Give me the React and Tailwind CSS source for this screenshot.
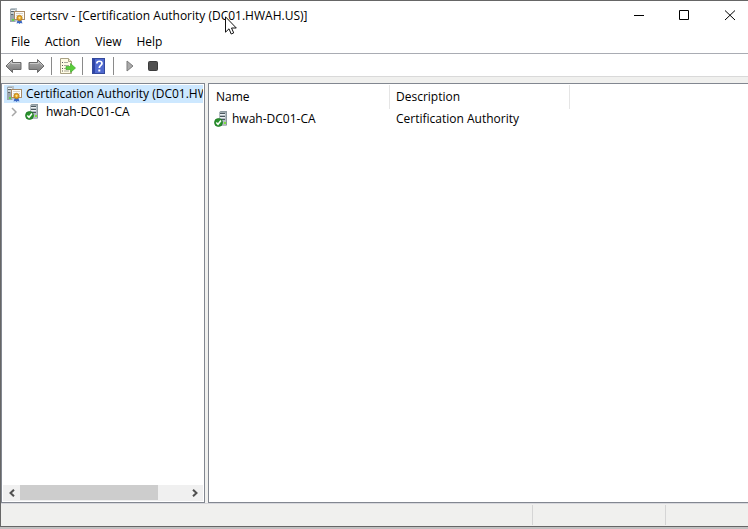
import React from "react";

function AuthorityIcon() {
  return (
    <svg width="16" height="16" viewBox="0 0 16 16" aria-hidden="true" className="shrink-0">
      <path d="M1 1 2.500 0H8v13l-1 1H1z" fill="#b9c3c9" />
      <path d="M1 1h5v13H1z" fill="#9aa6ad" />
      <path d="M2 2h4v1H2zM2 4.500h3v1H2z" fill="#f2f5f6" />
      <path d="M2 3h4v1H2zM2 6h2v1H2z" fill="#59666d" />
      <path d="M3 11h2v2H3z" fill="#5fd64a" />
      <rect x="5.500" y="3.500" width="10" height="8" fill="#fdfcf8" stroke="#a98b68" />
      <path d="M7 5.500h7M7 7.500h2M13 7.500h1" stroke="#d5d0cb" />
      <path d="m9 11-1.500 4.500 2-.5L10.500 16l1-1 2 .5L12 11z" fill="#3a68c4" />
      <circle cx="10.500" cy="10" r="2.700" fill="#e0a023" stroke="#b87a10" strokeWidth=".7" />
      <circle cx="10.500" cy="9.800" r="1.100" fill="#ffe58c" />
    </svg>
  );
}

function ServerIcon() {
  return (
    <svg width="16" height="16" viewBox="0 0 16 16" aria-hidden="true" className="shrink-0">
      <path d="M5 1.500 6.500 0H13v14l-1 1H5z" fill="#8d999f" />
      <path d="M5 1.500h7V15H5z" fill="#b3bdc2" />
      <path d="M6 2h5v1H6zM6 5h5v1H6zM7 8h4v1H7z" fill="#4c585e" />
      <path d="M6 3h5v1H6zM6 6h5v1H6z" fill="#eef2f4" />
      <path d="M10 11h2v2h-2z" fill="#7be03a" />
      <circle cx="4.500" cy="11.500" r="4" fill="#2a922c" stroke="#17701e" strokeWidth=".7" />
      <path d="m2.300 11.500 1.700 1.800 3-3.800" fill="none" stroke="#fff" strokeWidth="1.500" />
    </svg>
  );
}

function ArrowIcon({ flip }) {
  return (
    <svg width="17" height="16" viewBox="0 0 17 16" aria-hidden="true" className={flip ? "-scale-x-100" : ""}>
      <defs>
        <linearGradient id={flip ? "arrow-r" : "arrow-l"} x2="0" y2="1">
          <stop stopColor="#b0b0b0" />
          <stop offset=".5" stopColor="#959595" />
          <stop offset="1" stopColor="#777" />
        </linearGradient>
      </defs>
      <path
        d="M1 8 7.500 1.500v3H16v7H7.500v3z"
        fill={flip ? "url(#arrow-r)" : "url(#arrow-l)"}
        stroke="#6b6b6b"
        strokeLinejoin="round"
      />
      <path d="M2.500 7.500 6.500 3.700V5.500H15" fill="none" stroke="#c8c8c8" />
    </svg>
  );
}

function ExportIcon() {
  return (
    <svg width="17" height="16" viewBox="0 0 17 16" aria-hidden="true">
      <path d="M1.500.5h8l3 3v12h-11z" fill="#fffbe4" stroke="#a8a184" />
      <path d="M9.500.5v3h3" fill="#eee7c4" stroke="#a8a184" />
      <path d="M3 4.500h1M3 7.500h1M3 10.500h1M3 13h1" stroke="#555" />
      <path d="M5 4.500h4M5 7.500h5M5 10.500h3M5 13h5" stroke="#aaa99c" />
      <path d="M7 8.500h4.500v-3L16.500 10l-5 4.500v-3H7z" fill="#59ce39" stroke="#42a82b" strokeWidth=".7" />
    </svg>
  );
}

function HelpIcon() {
  return (
    <svg width="13" height="16" viewBox="0 0 13 16" aria-hidden="true">
      <rect x=".5" y=".5" width="12" height="15" fill="#4f69cf" stroke="#34499c" />
      <path d="M1 1h2v14H1z" fill="#2f45a6" />
      <path d="M4.800 5.500C4.800 2.500 10 2.500 10 5.500 10 7.500 7.300 7.500 7.300 10" fill="none" stroke="#fff" strokeWidth="1.700" />
      <path d="M6.300 11.500h2v2h-2z" fill="#fff" />
    </svg>
  );
}

function ScrollArrow({ flip }) {
  return (
    <svg width="6" height="8" viewBox="0 0 6 8" aria-hidden="true" className={flip ? "-scale-x-100" : ""}>
      <path d="M5 .7 1.500 4 5 7.300" fill="none" stroke="#505050" strokeWidth="2" />
    </svg>
  );
}

function Caption({ label, children }) {
  return (
    <button type="button" aria-label={label} className="flex h-[29px] w-[37px] items-center justify-center">
      <svg width="13" height="11" viewBox="0 0 13 11" fill="none" stroke="#000" aria-hidden="true">
        {children}
      </svg>
    </button>
  );
}

function Separator() {
  return <span className="h-[18px] w-px shrink-0 bg-[#8a8a8a]" />;
}

export default function App() {
  return (
    <div className="flex h-screen flex-col overflow-hidden bg-[#c2c1c1] pb-0.5 font-['Open_Sans','Noto_Sans',sans-serif] text-[12px] leading-4 text-black">
      <div className="flex min-h-0 flex-1 flex-col border-y border-l border-[#666] bg-[#f0f0ee]">
        <header className="relative flex h-[30px] shrink-0 items-center bg-white pl-2">
          <AuthorityIcon />
          <h1 className="ml-[5px] flex-1 whitespace-nowrap">certsrv - [Certification Authority (DC01.HWAH.US)]</h1>
          <div className="flex gap-[9px] self-start">
            <Caption label="Minimize"><path d="M3 5.500h10" /></Caption>
            <Caption label="Maximize"><path d="M2.500.5h9v9h-9z" /></Caption>
            <Caption label="Close"><path d="m2 .5 10 9.500M12 .5 2 10" /></Caption>
          </div>
          <svg width="12" height="19" viewBox="0 0 12 19" aria-hidden="true" className="absolute left-[224px] top-[15px]">
            <path d="M.5.8v15.400L4 12.800 6.200 18l2.500-1.100L6.500 12h4.800z" fill="#fff" stroke="#111" />
          </svg>
        </header>

        <nav className="flex h-[23px] shrink-0 items-center gap-[15px] border-b border-[#a9acb3] bg-white pl-2.5">
          <button type="button">File</button>
          <button type="button">Action</button>
          <button type="button">View</button>
          <button type="button">Help</button>
        </nav>

        <div className="flex h-[23px] shrink-0 items-center border-b border-[#d9d9d9] bg-white pl-1 pt-0.5">
          <button type="button" aria-label="Back" className="mr-1.5"><ArrowIcon /></button>
          <button type="button" aria-label="Forward" className="mr-1.5"><ArrowIcon flip /></button>
          <Separator />
          <button type="button" aria-label="Export list" className="ml-[7px] mr-1.5"><ExportIcon /></button>
          <Separator />
          <button type="button" aria-label="Help" className="ml-[9px] mr-2"><HelpIcon /></button>
          <Separator />
          <button type="button" aria-label="Start service" className="ml-3">
            <svg width="8" height="12" viewBox="0 0 8 12" aria-hidden="true">
              <path d="m1 1 6 5-6 5z" fill="#aaa" stroke="#7c7c7c" />
            </svg>
          </button>
          <button type="button" aria-label="Stop service" className="ml-3.5">
            <svg width="10" height="10" viewBox="0 0 10 10" aria-hidden="true">
              <rect x=".5" y=".5" width="9" height="9" rx="1" fill="#505050" stroke="#3b3b3b" />
            </svg>
          </button>
        </div>

        <main className="flex min-h-0 flex-1 gap-[3px] pt-1.5">
          <section className="flex w-[204px] shrink-0 flex-col overflow-hidden border border-[#828790] bg-white p-px">
            <ul className="min-h-0 flex-1 overflow-hidden">
              <li className="ml-px flex h-[18px] items-center gap-1 overflow-hidden whitespace-nowrap bg-[#cde8ff] pl-0.5">
                <AuthorityIcon />
                <span className="min-w-0 overflow-hidden">Certification Authority (DC01.HWAH.US)</span>
              </li>
              <li className="flex h-[18px] items-center pl-2">
                <button type="button" aria-label="Expand hwah-DC01-CA" className="mr-2">
                  <svg width="6" height="10" viewBox="0 0 6 10" aria-hidden="true">
                    <path d="m1 1 4 4-4 4" fill="none" stroke="#a6a6a6" strokeWidth="1.500" />
                  </svg>
                </button>
                <ServerIcon />
                <span className="ml-[5px]">hwah-DC01-CA</span>
              </li>
            </ul>
            <div className="flex h-4 items-stretch bg-[#f0f0f0]">
              <button type="button" aria-label="Scroll left" className="flex w-[17px] items-center justify-center"><ScrollArrow /></button>
              <div className="flex-1"><div className="h-[15px] w-[83%] bg-[#cdcdcd]" /></div>
              <button type="button" aria-label="Scroll right" className="flex w-[17px] items-center justify-center"><ScrollArrow flip /></button>
            </div>
          </section>

          <section className="min-w-0 flex-1 border-y border-l border-[#828790] bg-white pt-px">
            <table className="w-full table-fixed border-separate border-spacing-0 text-left">
              <thead>
                <tr className="h-6">
                  <th className="w-[181px] border-r border-[#e5e5e5] p-0 pl-[7px] font-normal">Name</th>
                  <th className="w-[180px] border-r border-[#e5e5e5] p-0 pl-1.5 font-normal">Description</th>
                  <td />
                </tr>
              </thead>
              <tbody>
                <tr className="h-5">
                  <td className="p-0 pl-[5px]"><div className="flex items-center gap-0.5"><ServerIcon />hwah-DC01-CA</div></td>
                  <td className="p-0 pl-1.5">Certification Authority</td>
                  <td />
                </tr>
              </tbody>
            </table>
          </section>
        </main>

        <footer className="flex h-[23px] shrink-0 border-t border-[#d7d7dc] pb-px pt-px">
          <div className="flex-1 border-r border-[#d5d5d5]" />
          <div className="w-[133px] border-r border-[#d5d5d5]" />
          <div className="w-[82px]" />
        </footer>
      </div>
    </div>
  );
}
